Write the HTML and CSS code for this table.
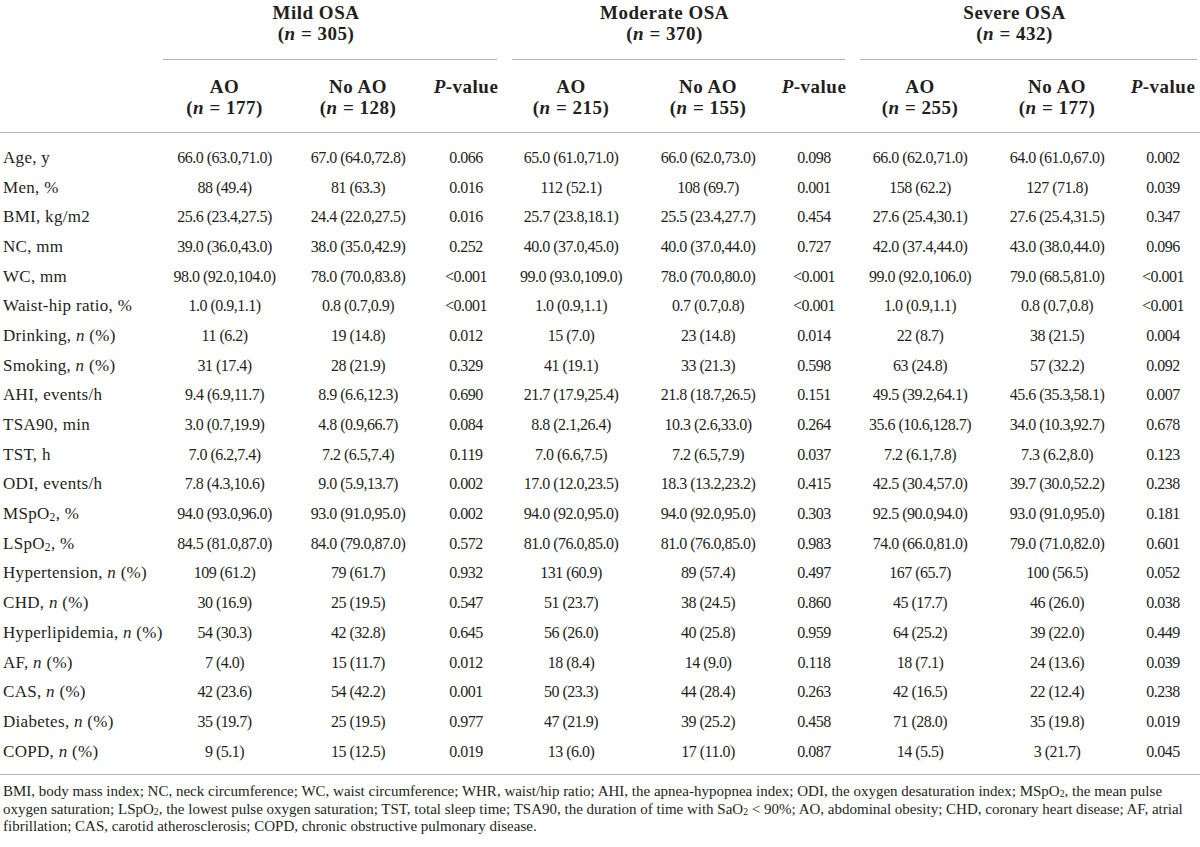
FILE: index.html
```html
<!DOCTYPE html>
<html lang="en">
<head>
<meta charset="utf-8">
<title>Table</title>
<link rel="stylesheet" href="styles.css">
</head>
<body>
<div class="table">
  <div class="row groups">
    <div class="blank"></div>
    <div class="group mild">Mild OSA<br>(<i>n</i> = 305)</div>
    <div class="group moderate">Moderate OSA<br>(<i>n</i> = 370)</div>
    <div class="group severe">Severe OSA<br>(<i>n</i> = 432)</div>
  </div>
  <div class="row subhead">
    <div class="blank"></div>
    <div class="h">AO<br>(<i>n</i> = 177)</div>
    <div class="h">No AO<br>(<i>n</i> = 128)</div>
    <div class="h"><i>P</i>-value</div>
    <div class="h">AO<br>(<i>n</i> = 215)</div>
    <div class="h">No AO<br>(<i>n</i> = 155)</div>
    <div class="h"><i>P</i>-value</div>
    <div class="h">AO<br>(<i>n</i> = 255)</div>
    <div class="h">No AO<br>(<i>n</i> = 177)</div>
    <div class="h"><i>P</i>-value</div>
  </div>
  <div class="tbody">
    <div class="row"><div class="lbl">Age, y</div><div class="num">66.0 (63.0,71.0)</div><div class="num">67.0 (64.0,72.8)</div><div class="num">0.066</div><div class="num">65.0 (61.0,71.0)</div><div class="num">66.0 (62.0,73.0)</div><div class="num">0.098</div><div class="num">66.0 (62.0,71.0)</div><div class="num">64.0 (61.0,67.0)</div><div class="num">0.002</div></div>
    <div class="row"><div class="lbl">Men, %</div><div class="num">88 (49.4)</div><div class="num">81 (63.3)</div><div class="num">0.016</div><div class="num">112 (52.1)</div><div class="num">108 (69.7)</div><div class="num">0.001</div><div class="num">158 (62.2)</div><div class="num">127 (71.8)</div><div class="num">0.039</div></div>
    <div class="row"><div class="lbl">BMI, kg/m2</div><div class="num">25.6 (23.4,27.5)</div><div class="num">24.4 (22.0,27.5)</div><div class="num">0.016</div><div class="num">25.7 (23.8,18.1)</div><div class="num">25.5 (23.4,27.7)</div><div class="num">0.454</div><div class="num">27.6 (25.4,30.1)</div><div class="num">27.6 (25.4,31.5)</div><div class="num">0.347</div></div>
    <div class="row"><div class="lbl">NC, mm</div><div class="num">39.0 (36.0,43.0)</div><div class="num">38.0 (35.0,42.9)</div><div class="num">0.252</div><div class="num">40.0 (37.0,45.0)</div><div class="num">40.0 (37.0,44.0)</div><div class="num">0.727</div><div class="num">42.0 (37.4,44.0)</div><div class="num">43.0 (38.0,44.0)</div><div class="num">0.096</div></div>
    <div class="row"><div class="lbl">WC, mm</div><div class="num">98.0 (92.0,104.0)</div><div class="num">78.0 (70.0,83.8)</div><div class="num">&lt;0.001</div><div class="num">99.0 (93.0,109.0)</div><div class="num">78.0 (70.0,80.0)</div><div class="num">&lt;0.001</div><div class="num">99.0 (92.0,106.0)</div><div class="num">79.0 (68.5,81.0)</div><div class="num">&lt;0.001</div></div>
    <div class="row"><div class="lbl">Waist-hip ratio, %</div><div class="num">1.0 (0.9,1.1)</div><div class="num">0.8 (0.7,0.9)</div><div class="num">&lt;0.001</div><div class="num">1.0 (0.9,1.1)</div><div class="num">0.7 (0.7,0.8)</div><div class="num">&lt;0.001</div><div class="num">1.0 (0.9,1.1)</div><div class="num">0.8 (0.7,0.8)</div><div class="num">&lt;0.001</div></div>
    <div class="row"><div class="lbl">Drinking, <i>n</i> (%)</div><div class="num">11 (6.2)</div><div class="num">19 (14.8)</div><div class="num">0.012</div><div class="num">15 (7.0)</div><div class="num">23 (14.8)</div><div class="num">0.014</div><div class="num">22 (8.7)</div><div class="num">38 (21.5)</div><div class="num">0.004</div></div>
    <div class="row"><div class="lbl">Smoking, <i>n</i> (%)</div><div class="num">31 (17.4)</div><div class="num">28 (21.9)</div><div class="num">0.329</div><div class="num">41 (19.1)</div><div class="num">33 (21.3)</div><div class="num">0.598</div><div class="num">63 (24.8)</div><div class="num">57 (32.2)</div><div class="num">0.092</div></div>
    <div class="row"><div class="lbl">AHI, events/h</div><div class="num">9.4 (6.9,11.7)</div><div class="num">8.9 (6.6,12.3)</div><div class="num">0.690</div><div class="num">21.7 (17.9,25.4)</div><div class="num">21.8 (18.7,26.5)</div><div class="num">0.151</div><div class="num">49.5 (39.2,64.1)</div><div class="num">45.6 (35.3,58.1)</div><div class="num">0.007</div></div>
    <div class="row"><div class="lbl">TSA90, min</div><div class="num">3.0 (0.7,19.9)</div><div class="num">4.8 (0.9,66.7)</div><div class="num">0.084</div><div class="num">8.8 (2.1,26.4)</div><div class="num">10.3 (2.6,33.0)</div><div class="num">0.264</div><div class="num">35.6 (10.6,128.7)</div><div class="num">34.0 (10.3,92.7)</div><div class="num">0.678</div></div>
    <div class="row"><div class="lbl">TST, h</div><div class="num">7.0 (6.2,7.4)</div><div class="num">7.2 (6.5,7.4)</div><div class="num">0.119</div><div class="num">7.0 (6.6,7.5)</div><div class="num">7.2 (6.5,7.9)</div><div class="num">0.037</div><div class="num">7.2 (6.1,7.8)</div><div class="num">7.3 (6.2,8.0)</div><div class="num">0.123</div></div>
    <div class="row"><div class="lbl">ODI, events/h</div><div class="num">7.8 (4.3,10.6)</div><div class="num">9.0 (5.9,13.7)</div><div class="num">0.002</div><div class="num">17.0 (12.0,23.5)</div><div class="num">18.3 (13.2,23.2)</div><div class="num">0.415</div><div class="num">42.5 (30.4,57.0)</div><div class="num">39.7 (30.0,52.2)</div><div class="num">0.238</div></div>
    <div class="row"><div class="lbl">MSpO<sub>2</sub>, %</div><div class="num">94.0 (93.0,96.0)</div><div class="num">93.0 (91.0,95.0)</div><div class="num">0.002</div><div class="num">94.0 (92.0,95.0)</div><div class="num">94.0 (92.0,95.0)</div><div class="num">0.303</div><div class="num">92.5 (90.0,94.0)</div><div class="num">93.0 (91.0,95.0)</div><div class="num">0.181</div></div>
    <div class="row"><div class="lbl">LSpO<sub>2</sub>, %</div><div class="num">84.5 (81.0,87.0)</div><div class="num">84.0 (79.0,87.0)</div><div class="num">0.572</div><div class="num">81.0 (76.0,85.0)</div><div class="num">81.0 (76.0,85.0)</div><div class="num">0.983</div><div class="num">74.0 (66.0,81.0)</div><div class="num">79.0 (71.0,82.0)</div><div class="num">0.601</div></div>
    <div class="row"><div class="lbl">Hypertension, <i>n</i> (%)</div><div class="num">109 (61.2)</div><div class="num">79 (61.7)</div><div class="num">0.932</div><div class="num">131 (60.9)</div><div class="num">89 (57.4)</div><div class="num">0.497</div><div class="num">167 (65.7)</div><div class="num">100 (56.5)</div><div class="num">0.052</div></div>
    <div class="row"><div class="lbl">CHD, <i>n</i> (%)</div><div class="num">30 (16.9)</div><div class="num">25 (19.5)</div><div class="num">0.547</div><div class="num">51 (23.7)</div><div class="num">38 (24.5)</div><div class="num">0.860</div><div class="num">45 (17.7)</div><div class="num">46 (26.0)</div><div class="num">0.038</div></div>
    <div class="row"><div class="lbl">Hyperlipidemia, <i>n</i> (%)</div><div class="num">54 (30.3)</div><div class="num">42 (32.8)</div><div class="num">0.645</div><div class="num">56 (26.0)</div><div class="num">40 (25.8)</div><div class="num">0.959</div><div class="num">64 (25.2)</div><div class="num">39 (22.0)</div><div class="num">0.449</div></div>
    <div class="row"><div class="lbl">AF, <i>n</i> (%)</div><div class="num">7 (4.0)</div><div class="num">15 (11.7)</div><div class="num">0.012</div><div class="num">18 (8.4)</div><div class="num">14 (9.0)</div><div class="num">0.118</div><div class="num">18 (7.1)</div><div class="num">24 (13.6)</div><div class="num">0.039</div></div>
    <div class="row"><div class="lbl">CAS, <i>n</i> (%)</div><div class="num">42 (23.6)</div><div class="num">54 (42.2)</div><div class="num">0.001</div><div class="num">50 (23.3)</div><div class="num">44 (28.4)</div><div class="num">0.263</div><div class="num">42 (16.5)</div><div class="num">22 (12.4)</div><div class="num">0.238</div></div>
    <div class="row"><div class="lbl">Diabetes, <i>n</i> (%)</div><div class="num">35 (19.7)</div><div class="num">25 (19.5)</div><div class="num">0.977</div><div class="num">47 (21.9)</div><div class="num">39 (25.2)</div><div class="num">0.458</div><div class="num">71 (28.0)</div><div class="num">35 (19.8)</div><div class="num">0.019</div></div>
    <div class="row"><div class="lbl">COPD, <i>n</i> (%)</div><div class="num">9 (5.1)</div><div class="num">15 (12.5)</div><div class="num">0.019</div><div class="num">13 (6.0)</div><div class="num">17 (11.0)</div><div class="num">0.087</div><div class="num">14 (5.5)</div><div class="num">3 (21.7)</div><div class="num">0.045</div></div>
  </div>
  <p class="foot">BMI, body mass index; NC, neck circumference; WC, waist circumference; WHR, waist/hip ratio; AHI, the apnea-hypopnea index; ODI, the oxygen desaturation index; MSpO<sub>2</sub>, the mean pulse oxygen saturation; LSpO<sub>2</sub>, the lowest pulse oxygen saturation; TST, total sleep time; TSA90, the duration of time with SaO<sub>2</sub> &lt; 90%; AO, abdominal obesity; CHD, coronary heart disease; AF, atrial fibrillation; CAS, carotid atherosclerosis; COPD, chronic obstructive pulmonary disease.</p>
</div>
</body>
</html>
```

FILE: styles.css
```css
html, body {
  margin: 0;
  padding: 0;
  background: #ffffff;
}

body {
  color: #231f20;
  font-family: "Liberation Serif", "Times New Roman", serif;
}

.table {
  width: 1200px;
}

.row {
  display: grid;
  grid-template-columns: 163px 123px 144px 72px 138px 136px 76px 136px 138px 74px;
}

.groups {
  padding-top: 2px;
}

.group {
  grid-column: span 3;
  text-align: center;
  font-weight: bold;
  font-size: 19px;
  letter-spacing: 0.5px;
  line-height: 21px;
  border-bottom: 1px solid #b1b1b1;
  padding: 0 28px 15px 0;
}

.group.mild {
  margin-right: 5px;
}

.group.moderate {
  margin-left: 10px;
  margin-right: 7px;
}

.group.severe {
  margin-left: 8px;
  margin-right: 3px;
}

.subhead {
  padding: 16px 0 14px;
  border-bottom: 1px solid #b1b1b1;
}

.subhead .h {
  text-align: center;
  font-weight: bold;
  font-size: 19px;
  letter-spacing: 0.5px;
  line-height: 21px;
  white-space: nowrap;
}

.tbody {
  padding: 10px 0 8px;
  border-bottom: 1px solid #b1b1b1;
}

.tbody .row {
  height: 29.7px;
  align-items: center;
}

.lbl {
  padding-left: 3px;
  font-size: 17px;
  letter-spacing: 0.3px;
  white-space: nowrap;
}

.num {
  text-align: center;
  font-size: 16px;
  letter-spacing: -0.5px;
  white-space: nowrap;
}

sub {
  font-size: 0.68em;
  line-height: 0;
  vertical-align: -0.2em;
}

.foot {
  margin: 0;
  padding: 8px 4px 0 3px;
  font-size: 15px;
  letter-spacing: 0;
  line-height: 17.5px;
}

.foot sub {
  font-size: 0.65em;
  vertical-align: -0.1em;
}
```
